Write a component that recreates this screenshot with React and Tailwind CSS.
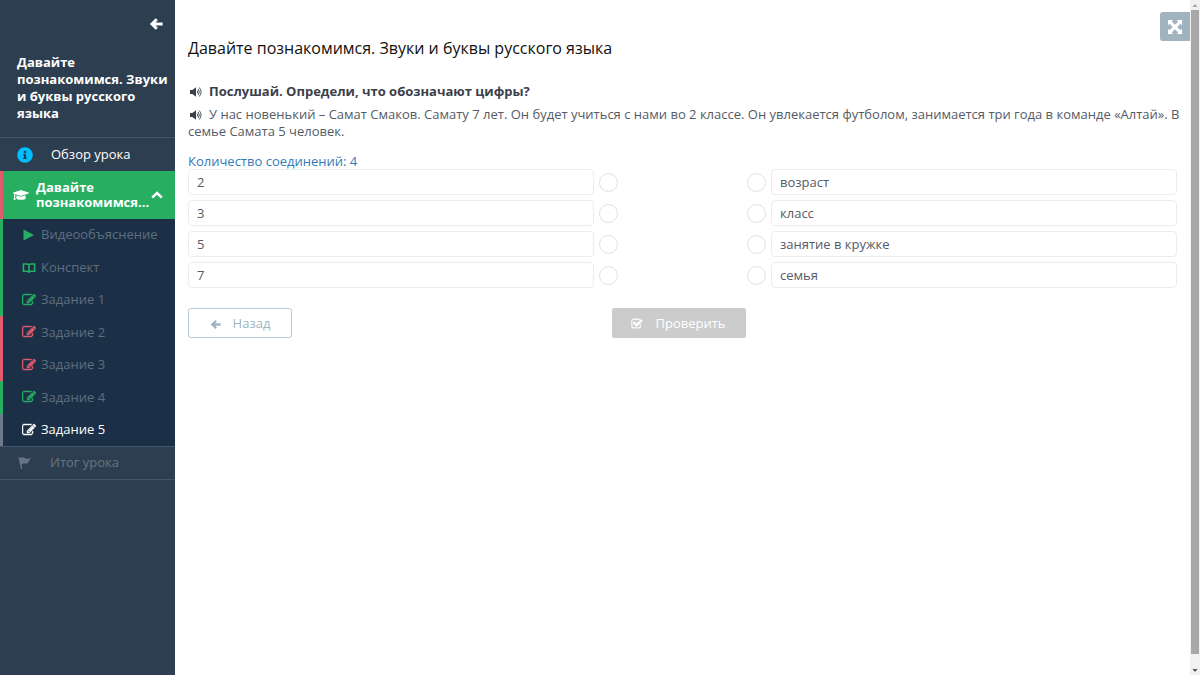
import React, { useState } from 'react';
import { FaGraduationCap, FaInfoCircle } from 'react-icons/fa';

const EditIcon = ({ className }) => (
  <svg viewBox="0 0 1792 1792" fill="currentColor" stroke="currentColor" strokeWidth="60" className={className} aria-hidden="true">
    <path d="M888 1184l116-116-152-152-116 116v56h96v96h56zm440-720q-16-16-33 1l-350 350q-17 17-1 33t33-1l350-350q17-17 1-33zm80 594v190q0 119-84.5 203.5t-203.5 84.5h-832q-119 0-203.5-84.5t-84.5-203.5v-832q0-119 84.5-203.5t203.5-84.5h832q63 0 117 25 15 7 18 23 3 17-9 29l-49 49q-14 14-32 8-23-6-45-6h-832q-66 0-113 47t-47 113v832q0 66 47 113t113 47h832q66 0 113-47t47-113v-126q0-13 9-22l64-64q15-15 35-7t20 29zm-96-738l288 288-672 672h-288v-288zm444 132l-92 92-288-288 92-92q28-28 68-28t68 28l152 152q28 28 28 68t-28 68z" />
  </svg>
);

const CheckIcon = ({ className }) => (
  <svg viewBox="0 0 1792 1792" fill="currentColor" stroke="currentColor" strokeWidth="50" className={className} aria-hidden="true">
    <path d="M1472 930v318q0 119-84.5 203.5t-203.5 84.5h-832q-119 0-203.5-84.5t-84.5-203.5v-832q0-119 84.5-203.5t203.5-84.5h832q63 0 117 25 15 7 18 23 3 17-9 29l-49 49q-10 10-23 10-3 0-9-2-23-6-45-6h-832q-66 0-113 47t-47 113v832q0 66 47 113t113 47h832q66 0 113-47t47-113v-254q0-13 9-22l64-64q10-10 23-10 6 0 12 3 20 8 20 29zm231-489l-814 814q-24 24-57 24t-57-24l-430-430q-24-24-24-57t24-57l110-110q24-24 57-24t57 24l263 263 647-647q24-24 57-24t57 24l110 110q24 24 24 57t-24 57z" />
  </svg>
);

const ArrowLeft = ({ className }) => (
  <svg viewBox="0 0 14 14" fill="none" stroke="currentColor" strokeWidth="3" className={className} aria-hidden="true">
    <path d="M7.800 2.200L3 7l4.800 4.800M3 7h10.600" />
  </svg>
);

const SpeakerIcon = ({ className }) => (
  <svg viewBox="0 0 13 12" fill="none" stroke="currentColor" className={className} aria-hidden="true">
    <path d="M0 4h2.400L6 1.200v9.600L2.400 8H0z" fill="currentColor" stroke="none" />
    <path d="M7.200 4.500Q8.400 6 7.200 7.500M8.200 3Q10.400 6 8.200 9M9.200 1.500Q13 6 9.200 10.500" strokeWidth="0.9" />
  </svg>
);

const ExpandIcon = ({ className }) => (
  <svg viewBox="0 0 14 14" fill="currentColor" className={className} aria-hidden="true">
    <path d="M0 0h5.200L3.700 1.500 7 4.800l3.300-3.300L8.800 0H14v5.200l-1.500-1.500L9.200 7l3.300 3.300L14 8.800V14H8.800l1.500-1.500L7 9.200l-3.300 3.300L5.200 14H0V8.800l1.500 1.500L4.800 7 1.500 3.700 0 5.200z" />
  </svg>
);

const PlayIcon = ({ className }) => (
  <svg viewBox="0 0 14 14" fill="currentColor" className={className} aria-hidden="true">
    <path d="M1.500 1.500L12 7 1.500 12.500z" />
  </svg>
);

const BookIcon = ({ className }) => (
  <svg viewBox="0 0 14 14" fill="none" stroke="currentColor" strokeWidth="1.6" className={className} aria-hidden="true">
    <path d="M1.400 3h3.900Q7 3 7 4.200Q7 3 8.700 3h3.900v7.300H8.700Q7 10.300 7 11.600Q7 10.300 5.300 10.300H1.400zM7 4v8" />
  </svg>
);

const FlagIcon = ({ className }) => (
  <svg viewBox="0 0 14 14" fill="currentColor" className={className} aria-hidden="true">
    <path d="M.3 1.300L1.500.9 2 2.200C3.800.800 5.300 1.200 6.500 2.100C8.500 3.200 10.500 2.600 13.500 1.700C12 3 11.300 4.800 10.200 6.400C8.600 8.400 6.900 7.200 5.300 7.500C4.300 7.700 3.700 8.100 3.500 8.600L4.400 13H3z" />
  </svg>
);

const ChevronUp = ({ className }) => (
  <svg viewBox="0 0 12 8" fill="none" stroke="currentColor" strokeWidth="2.6" className={className} aria-hidden="true">
    <path d="M1.200 6.600L6 2l4.800 4.600" />
  </svg>
);

const steps = [
  { title: 'Видеообъяснение', icon: PlayIcon, color: 'text-[#27ae60]', border: 'border-[#27ae60]' },
  { title: 'Конспект', icon: BookIcon, color: 'text-[#27ae60]', border: 'border-[#27ae60]' },
  { title: 'Задание 1', icon: EditIcon, color: 'text-[#27ae60]', border: 'border-[#27ae60]' },
  { title: 'Задание 2', icon: EditIcon, color: 'text-[#e35b6e]', border: 'border-[#e35b6e]' },
  { title: 'Задание 3', icon: EditIcon, color: 'text-[#e35b6e]', border: 'border-[#e35b6e]' },
  { title: 'Задание 4', icon: EditIcon, color: 'text-[#27ae60]', border: 'border-[#27ae60]' },
  { title: 'Задание 5', icon: EditIcon, color: 'text-white', border: 'border-[#6c7a89]', current: true },
];

const numbers = ['2', '3', '5', '7'];
const meanings = ['возраст', 'класс', 'занятие в кружке', 'семья'];

const Sidebar = () => (
  <aside className="w-[175px] shrink-0 bg-[#2d3e50] text-white text-[13px]">
    <div className="h-[138px] border-b border-[#44566a] pt-[17px]">
      <div className="flex justify-end pr-3">
        <button type="button" aria-label="Свернуть меню">
          <ArrowLeft className="size-[14px]" />
        </button>
      </div>
      <h2 className="mt-[23px] pl-[17px] pr-1 font-bold leading-[17px]">
        Давайте познакомимся. Звуки и буквы русского языка
      </h2>
    </div>

    <nav>
      <a href="#overview" className="flex h-[33px] items-center pl-[17px]">
        <FaInfoCircle className="size-4 text-[#00bfff]" />
        <span className="ml-[18px]">Обзор урока</span>
      </a>

      <button
        type="button"
        className="flex h-12 w-full items-center border-l-[3px] border-[#e35b6e] bg-[#27ae60] pl-[10px] pr-3 text-left"
      >
        <FaGraduationCap className="size-4" />
        <span className="ml-[7px] flex-1 font-bold leading-[15px]">Давайте познакомимся...</span>
        <ChevronUp className="h-2 w-3" />
      </button>

      <ul className="flex h-[227px] flex-col bg-[#1b3047]">
        {steps.map(({ title, icon: Icon, color, border, current }) => (
          <li key={title} className={`flex flex-1 border-l-[3px] ${border}`}>
            <a
              href="#step"
              className={`flex flex-1 items-center gap-[5px] pl-[19px] ${current ? 'text-white' : 'text-[#5f6e7d]'}`}
            >
              <Icon className={`size-[14px] ${color}`} />
              {title}
            </a>
          </li>
        ))}
      </ul>

      <a
        href="#summary"
        className="flex h-[34px] items-center border-y border-[#44566a] pl-[18px] text-[#667585]"
      >
        <FlagIcon className="size-[14px]" />
        <span className="ml-[18px]">Итог урока</span>
      </a>
    </nav>
  </aside>
);

const MatchRow = ({ label, side, selected, onSelect }) => (
  <li className={`flex items-center gap-[5px] ${side === 'right' ? 'flex-row-reverse' : ''}`}>
    <div className="flex h-[26px] flex-1 items-center rounded border border-[#e9edf0] px-2 pt-0.5">{label}</div>
    <button
      type="button"
      aria-label={label}
      onClick={onSelect}
      className={`size-[19px] rounded-full border ${selected ? 'border-[#337ab7]' : 'border-[#dde2e9]'}`}
    />
  </li>
);

const App = () => {
  const [selected, setSelected] = useState(null);

  return (
    <div className="flex min-h-screen bg-white font-['Open_Sans',sans-serif]">
      <Sidebar />

      <main className="relative min-w-0 flex-1 px-[13px] pt-9 text-[13px] text-[#555b66]">
        <button
          type="button"
          aria-label="На весь экран"
          className="absolute right-0 top-3 flex h-[29px] w-[30px] items-center justify-center rounded-l-[3px] bg-[#a0b4c0] text-white"
        >
          <ExpandIcon className="size-[14px]" />
        </button>

        <h1 className="text-base leading-6 text-[#111111]">
          Давайте познакомимся. Звуки и буквы русского языка
        </h1>

        <p className="mt-[23px] font-bold leading-[17px] text-[#3b404b]">
          <SpeakerIcon className="mb-px ml-[2px] mr-[6px] inline h-3 w-[13px]" />
          Послушай. Определи, что обозначают цифры?
        </p>
        <p className="-mr-2 mt-[6px] leading-[17px]">
          <SpeakerIcon className="mb-px ml-[2px] mr-[6px] inline h-3 w-[13px] text-[#3b404b]" />
          У нас новенький – Самат Смаков. Самату 7 лет. Он будет учиться с нами во 2 классе. Он
          увлекается футболом, занимается три года в команде «Алтай». В семье Самата 5 человек.
        </p>

        <p className="mt-[13px] leading-4 text-[#337ab7]">Количество соединений: 4</p>

        <div className="flex gap-[129px]">
          <ul className="flex flex-1 flex-col gap-[5px]">
            {numbers.map((n) => (
              <MatchRow key={n} label={n} side="left" selected={selected === n} onSelect={() => setSelected(n)} />
            ))}
          </ul>
          <ul className="flex flex-1 flex-col gap-[5px]">
            {meanings.map((m) => (
              <MatchRow key={m} label={m} side="right" selected={selected === m} onSelect={() => setSelected(m)} />
            ))}
          </ul>
        </div>

        <div className="mt-5 grid grid-cols-3 items-start pr-2">
          <button
            type="button"
            className="flex h-[30px] w-[104px] items-center justify-center gap-3 rounded-[3px] border border-[#bccbd5] pt-0.5 text-[#a0b4c0]"
          >
            <ArrowLeft className="size-[11px]" />
            Назад
          </button>
          <button
            type="button"
            className="flex h-[30px] w-[134px] items-center justify-center gap-3 justify-self-center rounded-[2px] bg-[#cccccc] pt-0.5 text-white"
          >
            <CheckIcon className="size-3" />
            Проверить
          </button>
        </div>
      </main>

      <div className="flex w-[10px] shrink-0 flex-col items-center bg-[#f1f1f1]" aria-hidden="true">
        <svg viewBox="0 0 10 10" className="size-[10px]">
          <path d="M2.500 7L5 4l2.500 3z" fill="#a3a3a3" />
        </svg>
        <div className="w-2 flex-1 bg-[#a8a8a8]" />
        <svg viewBox="0 0 10 21" className="h-[21px] w-[10px]">
          <path d="M2.500 15L5 18l2.500-3z" fill="#505050" />
        </svg>
      </div>
    </div>
  );
};

export default App;
